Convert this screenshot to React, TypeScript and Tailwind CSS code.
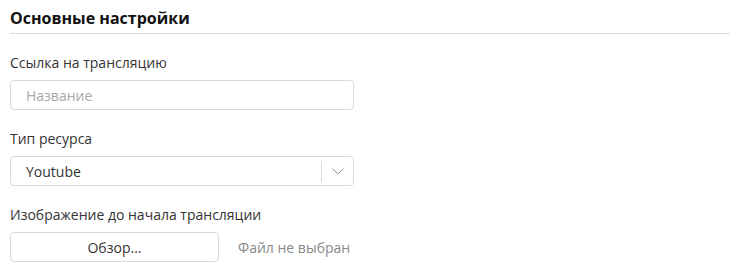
import React from "react";

export default function App() {
  return (
    <div className="w-[745px] h-[279px] bg-white px-[10px] pt-[7px]" style={{ fontFamily: '"Open Sans", sans-serif' }}>
      <div className="w-[720px] border-b border-[#dcdbe3] pb-[4px]">
        <h2 className="text-[16px] font-bold leading-[22px] text-[#111]">Основные настройки</h2>
      </div>
      <div className="mt-[19px] text-[14px] leading-[20px] text-[#333]">Ссылка на трансляцию</div>
      <div className="mt-[7px] w-[344px] h-[30px] border border-[#d9d9d9] rounded-[4px] flex items-center pl-[15px] text-[14px] text-[#a8a8a8]">
        Название
      </div>
      <div className="mt-[19px] text-[14px] leading-[20px] text-[#333]">Тип ресурса</div>
      <div className="mt-[7px] w-[344px] h-[30px] border border-[#d9d9d9] rounded-[4px] flex items-center text-[14px] text-[#333]">
        <span className="flex-1 pl-[15px]">Youtube</span>
        <div className="w-px h-[21px] bg-[#d9d9d9]" />
        <div className="w-[31px] flex items-center justify-center">
          <svg width="12" height="7" viewBox="0 0 12 7" fill="none">
            <path d="M0.5 0.8 L6 5.8 L11.5 0.8" stroke="#8a8fa0" strokeWidth="1" />
          </svg>
        </div>
      </div>
      <div className="mt-[19px] text-[14px] leading-[20px] text-[#333]">Изображение до начала трансляции</div>
      <div className="mt-[7px] flex items-center">
        <div className="w-[209px] h-[30px] border border-[#d9d9d9] rounded-[4px] flex items-center justify-center text-[14px] text-[#333]">
          Обзор...
        </div>
        <span className="ml-[19px] text-[14px] text-[#888]">Файл не выбран</span>
      </div>
    </div>
  );
}
